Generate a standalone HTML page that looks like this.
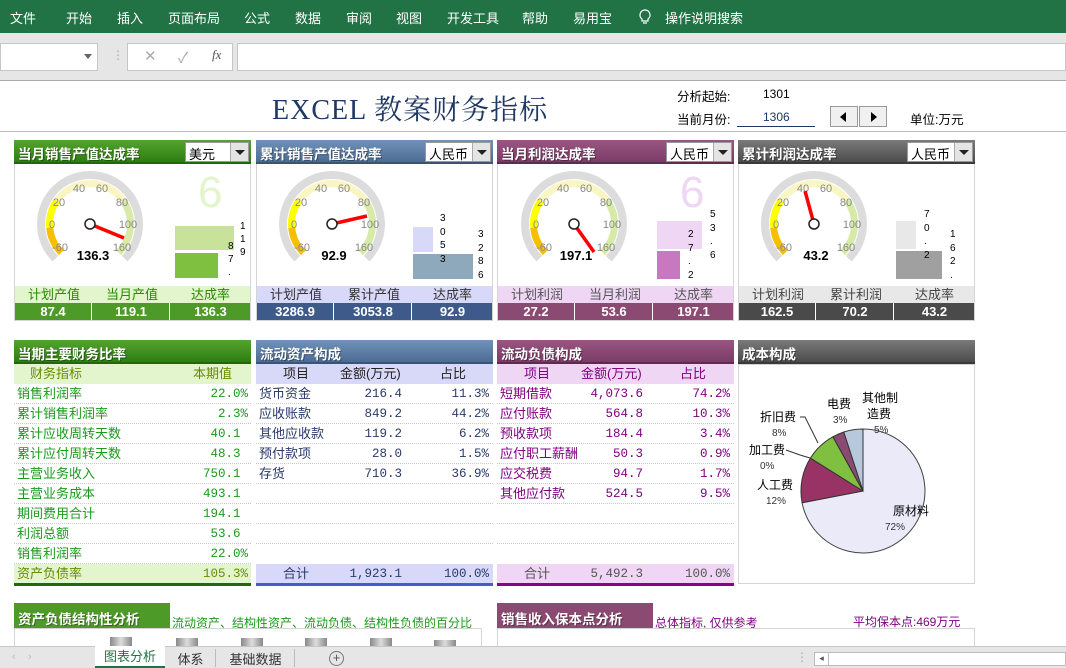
<!DOCTYPE html>
<html><head><meta charset="utf-8">
<style>
*{margin:0;padding:0;box-sizing:border-box}
body{width:1066px;height:668px;overflow:hidden;background:#fff;font-family:"Liberation Sans","Noto Sans CJK SC",sans-serif;position:relative}
.a{position:absolute;white-space:nowrap}
.rib{left:0;top:0;width:1066px;height:33px;background:#217346}
.rib span{position:absolute;top:8px;color:#fff;font-size:13px}
.hd{position:absolute;height:24px;color:#fff;font-weight:bold;font-size:13.5px;padding:3px 0 0 4px;text-shadow:1px 1px 0 rgba(0,0,0,.35)}
.g{background:linear-gradient(#55a32f,#2d7d12);border-bottom:2px solid #1d6a08}
.b{background:linear-gradient(#7092b8,#4c6c94);border-bottom:2px solid #3a5478}
.p{background:linear-gradient(#9a5682,#7a3c66);border-bottom:2px solid #5e2a4e}
.k{background:linear-gradient(#7a7a7a,#4c4c4c);border-bottom:2px solid #3a3a3a}
.dd{position:absolute;top:2px;height:20px;background:#fff;border:1px solid #999;color:#000;font-weight:normal;font-size:13px;text-shadow:none;padding:1px 0 0 3px}
.dd i{position:absolute;right:0;top:0;width:18px;height:18px;background:#e4e4e4;border-left:1px solid #aaa}
.dd i:after{content:"";position:absolute;left:4px;top:7px;border:5px solid transparent;border-top:5px solid #222;border-bottom:0}
.box{position:absolute;border:1px solid #d4d4d4;background:#fff}
.lab{position:absolute;height:17px;font-size:13px;text-align:center;line-height:17px}
.val{position:absolute;height:17px;font-size:13px;font-weight:bold;color:#fff;text-align:center;line-height:17px}
.row{position:absolute;height:20px;font-size:13px;line-height:20px;border-bottom:1px dotted #c8c8c8}
.n{font-family:"Liberation Mono",monospace;font-size:12.5px;position:absolute;top:0}
.h{visibility:hidden}
.small{font-size:10px;color:#000;font-family:"Liberation Sans",sans-serif}
</style></head><body>

<div class="a rib">
<span style="left:10px">文件</span><span style="left:66px">开始</span><span style="left:117px">插入</span><span style="left:168px">页面布局</span><span style="left:244px">公式</span><span style="left:295px">数据</span><span style="left:346px">审阅</span><span style="left:396px">视图</span><span style="left:447px">开发工具</span><span style="left:522px">帮助</span><span style="left:573px">易用宝</span>
<svg style="position:absolute;left:638px;top:9px" width="14" height="16" viewBox="0 0 14 16"><path d="M7 1a5 5 0 0 0-3 9v2h6v-2a5 5 0 0 0-3-9zM5 14h4" fill="none" stroke="#fff" stroke-width="1.2"/></svg>
<span style="left:665px">操作说明搜索</span>
</div>
<div class="a" style="left:0;top:33px;width:1066px;height:48px;background:#e6e6e6;border-bottom:1px solid #ababab"></div>
<div class="a" style="left:0;top:43px;width:98px;height:28px;background:#fff;border:1px solid #c6c6c6"></div>
<div class="a" style="left:84px;top:54px;border:4px solid transparent;border-top:5px solid #666;border-bottom:0"></div>
<div class="a" style="left:112px;top:48px;color:#aaa;font-size:12px">⋮</div>
<div class="a" style="left:127px;top:43px;width:106px;height:28px;background:#fff;border:1px solid #c6c6c6;color:#aaa;font-size:15px"><span style="position:absolute;left:16px;top:3px">✕</span><span style="position:absolute;left:50px;top:3px">✓</span><span style="position:absolute;left:84px;top:3px;color:#555;font-family:'Liberation Serif';font-style:italic;font-size:13px">fx</span></div>
<div class="a" style="left:237px;top:43px;width:829px;height:28px;background:#fff;border:1px solid #c6c6c6"></div>

<div class="a" style="left:272px;top:88px;font-family:'Liberation Serif','Noto Serif CJK SC',serif;font-size:28px;color:#1f3864;letter-spacing:1px">EXCEL 教案财务指标</div>
<div class="a" style="left:677px;top:86px;font-size:12.5px">分析起始:</div>
<div class="a" style="left:763px;top:87px;font-size:12px">1301</div>
<div class="a" style="left:677px;top:109px;font-size:12.5px">当前月份:</div>
<div class="a" style="left:763px;top:110px;font-size:12px;color:#1f3864">1306</div>
<div class="a" style="left:737px;top:126px;width:78px;border-top:1px solid #1f3864"></div>
<div class="a" style="left:830px;top:106px;width:28px;height:21px;background:#f0f0f0;border:1px solid #999"><div style="position:absolute;left:9px;top:5px;border:5px solid transparent;border-right:6px solid #000;border-left:0"></div></div>
<div class="a" style="left:859px;top:106px;width:28px;height:21px;background:#f0f0f0;border:1px solid #999"><div style="position:absolute;left:11px;top:5px;border:5px solid transparent;border-left:6px solid #000;border-right:0"></div></div>
<div class="a" style="left:910px;top:109px;font-size:12.5px">单位:万元</div>
<div class="a" style="left:0;top:131px;width:1066px;border-top:1px solid #bbb"></div>

<!-- gauge panels -->
<div class="box" style="left:14px;top:140px;width:237px;height:181px"></div>
<div class="box" style="left:256px;top:140px;width:237px;height:181px"></div>
<div class="box" style="left:497px;top:140px;width:237px;height:181px"></div>
<div class="box" style="left:738px;top:140px;width:237px;height:181px"></div>

<div class="hd g" style="left:14px;top:140px;width:237px">当月销售产值达成率<div class="dd" style="left:171px;width:64px">美元<i></i></div></div>
<div class="hd b" style="left:256px;top:140px;width:237px">累计销售产值达成率<div class="dd" style="left:169px;width:66px">人民币<i></i></div></div>
<div class="hd p" style="left:497px;top:140px;width:237px">当月利润达成率<div class="dd" style="left:169px;width:66px">人民币<i></i></div></div>
<div class="hd k" style="left:738px;top:140px;width:237px">累计利润达成率<div class="dd" style="left:169px;width:66px">人民币<i></i></div></div>

<!-- gauge 1 -->
<svg class="a" style="left:30px;top:164px" width="120" height="120" viewBox="-60 -60 120 120" font-family="Liberation Sans" font-size="11" fill="#888" text-anchor="middle">
<path d="M-34.65 34.65A49 49 0 1 1 34.65 34.65" fill="none" stroke="#dcdcdc" stroke-width="8"/>
<path d="M-28.6 28.6A40.5 40.5 0 0 1 -40.3 3.5" fill="none" stroke="#f5c000" stroke-width="7"/>
<path d="M-40.3 3.5A40.5 40.5 0 0 1 -33.2 -23.2" fill="none" stroke="#ffff00" stroke-width="7"/>
<path d="M-33.2 -23.2A40.5 40.5 0 0 1 33.2 -23.2" fill="none" stroke="#faf6c4" stroke-width="7"/>
<path d="M33.2 -23.2A40.5 40.5 0 0 1 28.6 28.6" fill="none" stroke="#d8eaa8" stroke-width="7"/>
<text x="-11" y="-32">40</text><text x="12" y="-32">60</text><text x="-31" y="-18">20</text><text x="32" y="-18">80</text><text x="-38" y="4">0</text><text x="38" y="4">100</text><text x="-30" y="27">-60</text><text x="32" y="27">160</text>
<line x1="0" y1="0" x2="34" y2="14" stroke="#f00" stroke-width="3.5"/><circle r="5" fill="#fff" stroke="#222" stroke-width="1.5"/>
<text x="3" y="36" fill="#000" font-weight="bold" font-size="13">136.3</text></svg>
<!-- gauge 2 -->
<svg class="a" style="left:272px;top:164px" width="120" height="120" viewBox="-60 -60 120 120" font-family="Liberation Sans" font-size="11" fill="#888" text-anchor="middle">
<path d="M-34.65 34.65A49 49 0 1 1 34.65 34.65" fill="none" stroke="#dcdcdc" stroke-width="8"/>
<path d="M-28.6 28.6A40.5 40.5 0 0 1 -40.3 3.5" fill="none" stroke="#f5c000" stroke-width="7"/>
<path d="M-40.3 3.5A40.5 40.5 0 0 1 -33.2 -23.2" fill="none" stroke="#ffff00" stroke-width="7"/>
<path d="M-33.2 -23.2A40.5 40.5 0 0 1 33.2 -23.2" fill="none" stroke="#faf6c4" stroke-width="7"/>
<path d="M33.2 -23.2A40.5 40.5 0 0 1 28.6 28.6" fill="none" stroke="#d8eaa8" stroke-width="7"/>
<text x="-11" y="-32">40</text><text x="12" y="-32">60</text><text x="-31" y="-18">20</text><text x="32" y="-18">80</text><text x="-38" y="4">0</text><text x="38" y="4">100</text><text x="-30" y="27">-60</text><text x="32" y="27">160</text>
<line x1="0" y1="0" x2="35" y2="-8" stroke="#f00" stroke-width="3.5"/><circle r="5" fill="#fff" stroke="#222" stroke-width="1.5"/>
<text x="2" y="36" fill="#000" font-weight="bold" font-size="13">92.9</text></svg>
<!-- gauge 3 -->
<svg class="a" style="left:514px;top:164px" width="120" height="120" viewBox="-60 -60 120 120" font-family="Liberation Sans" font-size="11" fill="#888" text-anchor="middle">
<path d="M-34.65 34.65A49 49 0 1 1 34.65 34.65" fill="none" stroke="#dcdcdc" stroke-width="8"/>
<path d="M-28.6 28.6A40.5 40.5 0 0 1 -40.3 3.5" fill="none" stroke="#f5c000" stroke-width="7"/>
<path d="M-40.3 3.5A40.5 40.5 0 0 1 -33.2 -23.2" fill="none" stroke="#ffff00" stroke-width="7"/>
<path d="M-33.2 -23.2A40.5 40.5 0 0 1 33.2 -23.2" fill="none" stroke="#faf6c4" stroke-width="7"/>
<path d="M33.2 -23.2A40.5 40.5 0 0 1 28.6 28.6" fill="none" stroke="#d8eaa8" stroke-width="7"/>
<text x="-11" y="-32">40</text><text x="12" y="-32">60</text><text x="-31" y="-18">20</text><text x="32" y="-18">80</text><text x="-38" y="4">0</text><text x="38" y="4">100</text><text x="-30" y="27">-60</text><text x="32" y="27">160</text>
<line x1="0" y1="0" x2="20" y2="28" stroke="#f00" stroke-width="3.5"/><circle r="5" fill="#fff" stroke="#222" stroke-width="1.5"/>
<text x="2" y="36" fill="#000" font-weight="bold" font-size="13">197.1</text></svg>
<!-- gauge 4 -->
<svg class="a" style="left:754px;top:164px" width="120" height="120" viewBox="-60 -60 120 120" font-family="Liberation Sans" font-size="11" fill="#888" text-anchor="middle">
<path d="M-34.65 34.65A49 49 0 1 1 34.65 34.65" fill="none" stroke="#dcdcdc" stroke-width="8"/>
<path d="M-28.6 28.6A40.5 40.5 0 0 1 -40.3 3.5" fill="none" stroke="#f5c000" stroke-width="7"/>
<path d="M-40.3 3.5A40.5 40.5 0 0 1 -33.2 -23.2" fill="none" stroke="#ffff00" stroke-width="7"/>
<path d="M-33.2 -23.2A40.5 40.5 0 0 1 33.2 -23.2" fill="none" stroke="#faf6c4" stroke-width="7"/>
<path d="M33.2 -23.2A40.5 40.5 0 0 1 28.6 28.6" fill="none" stroke="#d8eaa8" stroke-width="7"/>
<text x="-11" y="-32">40</text><text x="12" y="-32">60</text><text x="-31" y="-18">20</text><text x="32" y="-18">80</text><text x="-38" y="4">0</text><text x="38" y="4">100</text><text x="-30" y="27">-60</text><text x="32" y="27">160</text>
<line x1="0" y1="0" x2="-9" y2="-33" stroke="#f00" stroke-width="3.5"/><circle r="5" fill="#fff" stroke="#222" stroke-width="1.5"/>
<text x="2" y="36" fill="#000" font-weight="bold" font-size="13">43.2</text></svg>

<!-- bars -->
<div class="a" style="left:198px;top:168px;font-size:44px;color:#e2f5cc">6</div>
<div class="a" style="left:175px;top:226px;width:59px;height:24px;background:#c8e29a"></div>
<div class="a" style="left:175px;top:253px;width:43px;height:25px;background:#80c040"></div>
<div class="a small" style="left:240px;top:220px;line-height:13px">1<br>1<br>9</div>
<div class="a small" style="left:228px;top:240px;line-height:13px">8<br>7<br>.</div>

<div class="a" style="left:413px;top:227px;width:20px;height:25px;background:#d8d8f8"></div>
<div class="a" style="left:413px;top:254px;width:60px;height:25px;background:#8ea8bc"></div>
<div class="a small" style="left:440px;top:212px;line-height:13.5px">3<br>0<br>5<br>3</div>
<div class="a small" style="left:478px;top:228px;line-height:13.5px">3<br>2<br>8<br>6</div>

<div class="a" style="left:680px;top:168px;font-size:44px;color:#efd6f5">6</div>
<div class="a" style="left:657px;top:221px;width:45px;height:28px;background:#efd6f5"></div>
<div class="a" style="left:657px;top:251px;width:23px;height:28px;background:#c878c0"></div>
<div class="a small" style="left:710px;top:208px;line-height:13.5px">5<br>3<br>.<br>6</div>
<div class="a small" style="left:688px;top:228px;line-height:13.5px">2<br>7<br>.<br>2</div>

<div class="a" style="left:896px;top:221px;width:20px;height:28px;background:#e8e8e8"></div>
<div class="a" style="left:896px;top:251px;width:46px;height:28px;background:#a0a0a0"></div>
<div class="a small" style="left:924px;top:208px;line-height:13.5px">7<br>0<br>.<br>2</div>
<div class="a small" style="left:950px;top:228px;line-height:13.5px">1<br>6<br>2<br>.</div>

<!-- label/value rows -->
<div class="lab" style="left:15px;top:286px;width:235px;background:#e2f5cc;color:#2a8a00"><span style="position:absolute;left:0;width:78px">计划产值</span><span style="position:absolute;left:78px;width:78px">当月产值</span><span style="position:absolute;left:156px;width:79px">达成率</span></div>
<div class="val" style="left:15px;top:303px;width:235px;background:#4e9a28"><span style="position:absolute;left:0;width:77px;border-right:1px solid #fff">87.4</span><span style="position:absolute;left:78px;width:77px;border-right:1px solid #fff">119.1</span><span style="position:absolute;left:156px;width:79px">136.3</span></div>

<div class="lab" style="left:257px;top:286px;width:235px;background:#d8d8f8;color:#333"><span style="position:absolute;left:0;width:78px">计划产值</span><span style="position:absolute;left:78px;width:78px">累计产值</span><span style="position:absolute;left:156px;width:79px">达成率</span></div>
<div class="val" style="left:257px;top:303px;width:235px;background:#3d5a8a"><span style="position:absolute;left:0;width:77px;border-right:1px solid #fff">3286.9</span><span style="position:absolute;left:78px;width:77px;border-right:1px solid #fff">3053.8</span><span style="position:absolute;left:156px;width:79px">92.9</span></div>

<div class="lab" style="left:498px;top:286px;width:235px;background:#efd6f5;color:#555"><span style="position:absolute;left:0;width:78px">计划利润</span><span style="position:absolute;left:78px;width:78px">当月利润</span><span style="position:absolute;left:156px;width:79px">达成率</span></div>
<div class="val" style="left:498px;top:303px;width:235px;background:#8a4a72"><span style="position:absolute;left:0;width:77px;border-right:1px solid #fff">27.2</span><span style="position:absolute;left:78px;width:77px;border-right:1px solid #fff">53.6</span><span style="position:absolute;left:156px;width:79px">197.1</span></div>

<div class="lab" style="left:739px;top:286px;width:235px;background:#e8e8e8;color:#444"><span style="position:absolute;left:0;width:78px">计划利润</span><span style="position:absolute;left:78px;width:78px">累计利润</span><span style="position:absolute;left:156px;width:79px">达成率</span></div>
<div class="val" style="left:739px;top:303px;width:235px;background:#4a4a4a"><span style="position:absolute;left:0;width:77px;border-right:1px solid #fff">162.5</span><span style="position:absolute;left:78px;width:77px;border-right:1px solid #fff">70.2</span><span style="position:absolute;left:156px;width:79px">43.2</span></div>

<!-- second row -->
<div class="hd g" style="left:14px;top:340px;width:237px">当期主要财务比率</div>
<div class="hd b" style="left:256px;top:340px;width:237px">流动资产构成</div>
<div class="hd p" style="left:497px;top:340px;width:237px">流动负债构成</div>
<div class="hd k" style="left:738px;top:340px;width:237px">成本构成</div>
<div class="box" style="left:738px;top:364px;width:237px;height:220px"></div>

<div class="a" style="left:14px;top:364px;width:237px;height:20px;background:#e2f5cc;color:#6a8a00;font-size:13px;line-height:20px"><span style="position:absolute;left:16px">财务指标</span><span style="position:absolute;left:179px">本期值</span></div>
<div class="a" style="left:256px;top:364px;width:237px;height:20px;background:#d8d8f8;color:#222;font-size:13px;line-height:20px"><span style="position:absolute;left:27px">项目</span><span style="position:absolute;left:84px">金额(万元)</span><span style="position:absolute;left:184px">占比</span></div>
<div class="a" style="left:497px;top:364px;width:237px;height:20px;background:#efd6f5;color:#800080;font-size:13px;line-height:20px"><span style="position:absolute;left:27px">项目</span><span style="position:absolute;left:84px">金额(万元)</span><span style="position:absolute;left:183px">占比</span></div>

<!-- panel A rows -->
<div style="color:#1a9a1a">
<div class="row" style="left:14px;top:384px;width:237px"><span style="margin-left:3px">销售利润率</span><span class="n" style="right:3px">22.0%</span></div>
<div class="row" style="left:14px;top:404px;width:237px"><span style="margin-left:3px">累计销售利润率</span><span class="n" style="right:3px">2.3%</span></div>
<div class="row" style="left:14px;top:424px;width:237px"><span style="margin-left:3px">累计应收周转天数</span><span class="n" style="right:3px">40.1<span class="h">%</span></span></div>
<div class="row" style="left:14px;top:444px;width:237px"><span style="margin-left:3px">累计应付周转天数</span><span class="n" style="right:3px">48.3<span class="h">%</span></span></div>
<div class="row" style="left:14px;top:464px;width:237px"><span style="margin-left:3px">主营业务收入</span><span class="n" style="right:3px">750.1<span class="h">%</span></span></div>
<div class="row" style="left:14px;top:484px;width:237px"><span style="margin-left:3px">主营业务成本</span><span class="n" style="right:3px">493.1<span class="h">%</span></span></div>
<div class="row" style="left:14px;top:504px;width:237px"><span style="margin-left:3px">期间费用合计</span><span class="n" style="right:3px">194.1<span class="h">%</span></span></div>
<div class="row" style="left:14px;top:524px;width:237px"><span style="margin-left:3px">利润总额</span><span class="n" style="right:3px">53.6<span class="h">%</span></span></div>
<div class="row" style="left:14px;top:544px;width:237px"><span style="margin-left:3px">销售利润率</span><span class="n" style="right:3px">22.0%</span></div>
<div class="row" style="left:14px;top:564px;width:237px;background:#e2f5cc;color:#6a8a00;border:0"><span style="margin-left:3px">资产负债率</span><span class="n" style="right:3px">105.3%</span></div>
</div>
<div class="a" style="left:14px;top:583px;width:237px;height:3px;background:#1d6a08"></div>

<!-- panel B rows -->
<div style="color:#2a3a6a">
<div class="row" style="left:256px;top:384px;width:237px"><span style="margin-left:3px">货币资金</span><span class="n" style="right:91px">216.4</span><span class="n" style="right:4px">11.3%</span></div>
<div class="row" style="left:256px;top:404px;width:237px"><span style="margin-left:3px">应收账款</span><span class="n" style="right:91px">849.2</span><span class="n" style="right:4px">44.2%</span></div>
<div class="row" style="left:256px;top:424px;width:237px"><span style="margin-left:3px">其他应收款</span><span class="n" style="right:91px">119.2</span><span class="n" style="right:4px">6.2%</span></div>
<div class="row" style="left:256px;top:444px;width:237px"><span style="margin-left:3px">预付款项</span><span class="n" style="right:91px">28.0</span><span class="n" style="right:4px">1.5%</span></div>
<div class="row" style="left:256px;top:464px;width:237px"><span style="margin-left:3px">存货</span><span class="n" style="right:91px">710.3</span><span class="n" style="right:4px">36.9%</span></div>
<div class="row" style="left:256px;top:484px;width:237px"></div>
<div class="row" style="left:256px;top:504px;width:237px"></div>
<div class="row" style="left:256px;top:524px;width:237px"></div>
<div class="row" style="left:256px;top:544px;width:237px;border:0"></div>
<div class="row" style="left:256px;top:564px;width:237px;background:#d8d8f8;border:0"><span style="position:absolute;left:27px">合计</span><span class="n" style="right:91px">1,923.1</span><span class="n" style="right:4px">100.0%</span></div>
</div>
<div class="a" style="left:256px;top:583px;width:237px;height:3px;background:#4a5acc"></div>

<!-- panel C rows -->
<div style="color:#800080">
<div class="row" style="left:497px;top:384px;width:237px"><span style="margin-left:3px">短期借款</span><span class="n" style="right:91px">4,073.6</span><span class="n" style="right:4px">74.2%</span></div>
<div class="row" style="left:497px;top:404px;width:237px"><span style="margin-left:3px">应付账款</span><span class="n" style="right:91px">564.8</span><span class="n" style="right:4px">10.3%</span></div>
<div class="row" style="left:497px;top:424px;width:237px"><span style="margin-left:3px">预收款项</span><span class="n" style="right:91px">184.4</span><span class="n" style="right:4px">3.4%</span></div>
<div class="row" style="left:497px;top:444px;width:237px"><span style="margin-left:3px">应付职工薪酬</span><span class="n" style="right:91px">50.3</span><span class="n" style="right:4px">0.9%</span></div>
<div class="row" style="left:497px;top:464px;width:237px"><span style="margin-left:3px">应交税费</span><span class="n" style="right:91px">94.7</span><span class="n" style="right:4px">1.7%</span></div>
<div class="row" style="left:497px;top:484px;width:237px"><span style="margin-left:3px">其他应付款</span><span class="n" style="right:91px">524.5</span><span class="n" style="right:4px">9.5%</span></div>
<div class="row" style="left:497px;top:504px;width:237px"></div>
<div class="row" style="left:497px;top:524px;width:237px"></div>
<div class="row" style="left:497px;top:564px;width:237px;background:#efd6f5;border:0;color:#555"><span style="position:absolute;left:27px">合计</span><span class="n" style="right:91px">5,492.3</span><span class="n" style="right:4px">100.0%</span></div>
</div>
<div class="a" style="left:497px;top:583px;width:237px;height:3px;background:#8a008a"></div>

<!-- pie -->
<svg class="a" style="left:738px;top:364px" width="237" height="220" viewBox="738 364 237 220" font-family="Liberation Sans,Noto Sans CJK SC,sans-serif" font-size="12">
<path d="M863 491L863 429A62 62 0 1 1 802.1 502.8Z" fill="#eaeaf8" stroke="#444" stroke-width="1"/>
<path d="M863 491L802.1 502.8A62 62 0 0 1 810.4 458.1Z" fill="#993366" stroke="#333"/>
<path d="M863 491L810.4 458.1A62 62 0 0 1 832.9 436.8Z" fill="#80c040" stroke="#333"/>
<path d="M863 491L832.9 436.8A62 62 0 0 1 843.8 432Z" fill="#8a4a72" stroke="#333"/>
<path d="M863 491L843.8 432A62 62 0 0 1 863 429Z" fill="#b8c8dc" stroke="#333"/>
<path d="M800 417L805 417L818 443M786 450L800 455L810 458" fill="none" stroke="#333"/>
<text x="893" y="515">原材料</text><text x="885" y="530" font-size="10" fill="#333">72%</text>
<text x="757" y="489">人工费</text><text x="766" y="504" font-size="10" fill="#333">12%</text>
<text x="749" y="454">加工费</text><text x="760" y="469" font-size="10" fill="#333">0%</text>
<text x="760" y="421">折旧费</text><text x="772" y="436" font-size="10" fill="#333">8%</text>
<text x="827" y="408">电费</text><text x="833" y="423" font-size="10" fill="#333">3%</text>
<text x="862" y="402">其他制</text><text x="867" y="418">造费</text><text x="874" y="433" font-size="10" fill="#333">5%</text>
</svg>

<!-- third section -->
<div class="a" style="left:14px;top:583px;width:237px;height:1px"></div>
<div class="hd" style="left:14px;top:603px;width:156px;height:26px;background:#4e9a28;padding-top:5px">资产负债结构性分析</div>
<div class="a" style="left:172px;top:614px;font-size:12px;color:#1a9a1a">流动资产、结构性资产、流动负债、结构性负债的百分比</div>
<div class="box" style="left:14px;top:628px;width:468px;height:30px"></div>
<div class="a" style="left:110px;top:637px;width:22px;height:10px;background:linear-gradient(90deg,#888,#ddd,#888)"></div>
<div class="a" style="left:176px;top:638px;width:22px;height:9px;background:linear-gradient(90deg,#888,#ddd,#888)"></div>
<div class="a" style="left:241px;top:638px;width:22px;height:9px;background:linear-gradient(90deg,#888,#ddd,#888)"></div>
<div class="a" style="left:305px;top:638px;width:22px;height:9px;background:linear-gradient(90deg,#888,#ddd,#888)"></div>
<div class="a" style="left:370px;top:638px;width:22px;height:9px;background:linear-gradient(90deg,#888,#ddd,#888)"></div>
<div class="a" style="left:434px;top:640px;width:22px;height:7px;background:linear-gradient(90deg,#888,#ddd,#888)"></div>
<div class="hd" style="left:497px;top:603px;width:156px;height:26px;background:#8a4a72;padding-top:5px">销售收入保本点分析</div>
<div class="a" style="left:655px;top:614px;font-size:12px;color:#800080">总体指标, 仅供参考</div>
<div class="a" style="left:853px;top:613px;font-size:12px;color:#800080">平均保本点:469万元</div>
<div class="box" style="left:497px;top:628px;width:478px;height:30px"></div>

<!-- sheet tabs -->
<div class="a" style="left:0;top:646px;width:1066px;height:22px;background:#e6e6e6;border-top:1px solid #c6c6c6"></div>
<div class="a" style="left:12px;top:651px;color:#bbb;font-size:11px">‹&nbsp;&nbsp;&nbsp;&nbsp;›</div>
<div class="a" style="left:95px;top:646px;width:70px;height:22px;background:#fff;color:#217346;font-size:13px;text-align:center;line-height:22px;border-bottom:2px solid #217346">图表分析</div>
<div class="a" style="left:166px;top:649px;width:50px;height:18px;border-right:1px solid #bbb;font-size:13px;text-align:center;color:#333">体系</div>
<div class="a" style="left:217px;top:649px;width:78px;height:18px;border-right:1px solid #bbb;font-size:13px;text-align:center;color:#333">基础数据</div>
<div class="a" style="left:329px;top:651px;width:15px;height:15px;border:1px solid #777;border-radius:50%;color:#555;font-size:13px;line-height:12px;text-align:center">+</div>
<div class="a" style="left:796px;top:650px;color:#aaa;font-size:12px">⋮</div>
<div class="a" style="left:814px;top:652px;width:252px;height:14px;background:#fff;border:1px solid #bbb"><div style="width:14px;height:12px;border-right:1px solid #bbb;color:#555;font-size:9px;text-align:center">◂</div></div>
</body></html>
